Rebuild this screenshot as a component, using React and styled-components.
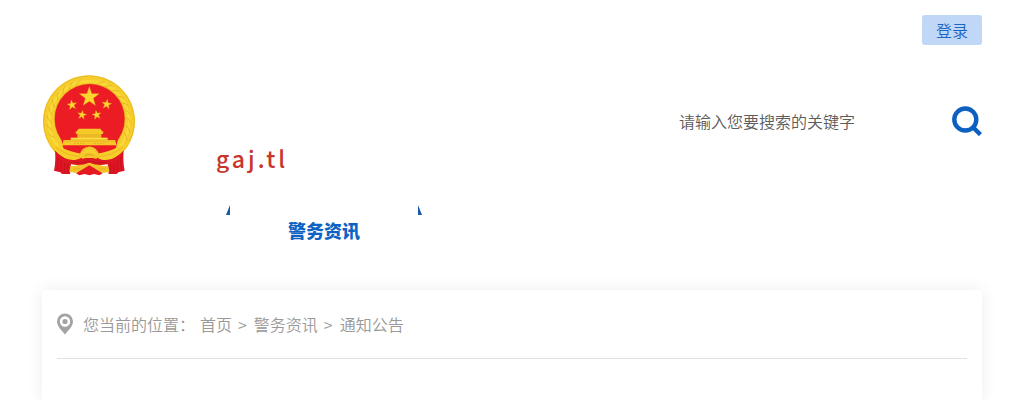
import React from 'react';
import styled, { createGlobalStyle } from 'styled-components';

const crumbs = [
  { label: '首页', href: '#home' },
  { label: '警务资讯', href: '#news' },
  { label: '通知公告', href: '#notice' },
];

// five pointed star centred on cx, cy
const star = (cx, cy, r, turn = 0) => {
  const points = [];
  for (let i = 0; i < 10; i += 1) {
    const radius = i % 2 ? r * 0.4 : r;
    const angle = ((i * 36 - 90 + turn) * Math.PI) / 180;
    points.push(`${(cx + radius * Math.cos(angle)).toFixed(1)},${(cy + radius * Math.sin(angle)).toFixed(1)}`);
  }
  return points.join(' ');
};

const gearTeeth = [-80, -60, -40, -20, 0, 20, 40, 60, 80];
const grains = [-112, -100, -88, -76, -64, -52, -40, -28, -16, 16, 28, 40, 52, 64, 76, 88, 100, 112];

const Emblem = () => (
  <EmblemSvg viewBox='27 21 276 303' role='img' aria-label='国徽'>
    <circle cx='165' cy='160' r='138' fill='#f5cd2c' />
    <circle cx='165' cy='160' r='136' fill='none' stroke='#eabb25' strokeWidth='3' />
    <circle cx='165' cy='160' r='120' fill='none' stroke='#fad936' strokeWidth='9' />
    {grains.map(angle => (
      <g key={angle} transform={`rotate(${angle} 165 160)`}>
        <path d='M157 48 Q166 36 177 33' fill='none' stroke='#dfab24' strokeWidth='2' />
      </g>
    ))}
    <circle cx='167' cy='153' r='107' fill='#e8b31e' />
    <circle cx='167' cy='153' r='105' fill='#ec1c24' />
    <path d='M80 205 H254 L246 240 Q205 284 166 282 Q110 282 88 240 Z' fill='#ec1c24' />

    <g fill='#fbd62d' stroke='#e9b426' strokeWidth='1'>
      <polygon points={star(166, 87, 31)} />
      <polygon points={star(114, 111, 15, -8)} />
      <polygon points={star(218, 109, 15, 8)} />
      <polygon points={star(144, 141, 14, 10)} />
      <polygon points={star(188, 141, 14, -10)} />
    </g>

    <g fill='#f5c928'>
      <path d='M134 182 H199 L207 193 H126 Z' />
      <path d='M130 196 H202 V210 H130 Z' fill='#ecb825' />
      <path d='M124 191 H209 L206 198 H127 Z' />
      <path d='M110 209 H221 V216 H243 L248 232 H84 L89 216 H110 Z' />
    </g>
    <path d='M111 211 H220' stroke='#fbdf55' strokeWidth='3' />
    <path d='M90 219 H242' stroke='#e0a925' strokeWidth='2' />
    <path d='M120 226 H150 M181 226 H211' stroke='#cf9a20' strokeWidth='2' strokeDasharray='4 5' />

    {/* red drapery on both sides */}
    <path d='M63 247 Q79 266 112 280 L108 318 L84 318 L79 313 L60 308 Q66 280 63 247 Z' fill='#df1523' />
    <path d='M269 247 Q252 266 220 280 L224 318 L248 318 L253 313 L272 308 Q266 280 269 247 Z' fill='#df1523' />
    <path
      d='M71 264 Q75 289 69 309 M80 273 Q85 292 80 311 M91 280 Q94 299 91 316 M102 287 V316 M261 264 Q257 289 263 309 M252 273 Q247 292 252 311 M241 280 Q238 299 241 316 M230 287 V316'
      fill='none'
      stroke='#b51322'
      strokeWidth='2'
    />

    {/* wheat stems that cross under the gate */}
    <path d='M45 222 Q66 232 92 243 Q126 256 153 258 Q142 276 113 277 Q71 268 45 222 Z' fill='#f7cd2a' />
    <path d='M287 222 Q266 232 240 243 Q206 256 179 258 Q190 276 219 277 Q261 268 287 222 Z' fill='#f7cd2a' />
    <path
      d='M66 238 Q94 262 139 266 M266 238 Q238 262 193 266'
      fill='none'
      stroke='#e0aa24'
      strokeWidth='2'
    />
    <path d='M139 263 A27 22 0 0 1 193 263 L188 271 H144 Z' fill='#f8cf2d' />
    {gearTeeth.map(angle => (
      <rect
        key={angle}
        x='162'
        y='236'
        width='9'
        height='8'
        fill='#f5c62b'
        transform={`rotate(${angle} 166 265)`}
      />
    ))}
    <path d='M142 268 A25 20 0 0 1 190 268 L184 276 H148 Z' fill='#f4c52b' />
    <path d='M153 263 A18 13 0 0 1 179 263' fill='none' stroke='#dba523' strokeWidth='3' />
    <path d='M66 258 Q88 274 116 276 Q139 277 155 270 H177 Q193 277 216 276 Q244 274 266 258 Q254 285 218 289 Q190 294 166 284 Q142 294 114 289 Q78 285 66 258 Z' fill='#de1823' />
    <path d='M118 283 Q145 288 166 279 Q187 288 214 283' fill='none' stroke='#b51120' strokeWidth='2' />
    <path d='M109 293 Q143 297 158 288 H174 Q189 297 223 293 L226 311 L207 315 L180 306 L166 297 L152 306 L125 315 L106 311 Z' fill='#f3c42a' />
    <path d='M126 316 L166 292 L206 316 L196 322 L180 318 L166 322 L152 318 L136 322 Z' fill='#e51a23' />
    <path d='M118 303 L139 302 M193 302 L214 303' stroke='#dba523' strokeWidth='2' />
  </EmblemSvg>
);

const SearchIcon = () => (
  <svg width='30' height='30' viewBox='0 0 30 30' aria-hidden='true'>
    <circle cx='13.3' cy='13.5' r='11' fill='none' stroke='#0d5fc0' strokeWidth='4.4' />
    <path d='M20.5 20.7 L28.4 28.6' stroke='#0d5fc0' strokeWidth='4.4' />
  </svg>
);

const PinIcon = () => (
  <svg width='16' height='22' viewBox='0 0 16 22' aria-hidden='true'>
    <path
      d='M8 0.5 A8 8 0 0 1 16 8.5 C16 13.5 11 17.5 8 21.5 C5 17.5 0 13.5 0 8.5 A8 8 0 0 1 8 0.5 Z M8 3.3 A5.2 5.2 0 1 0 8 13.7 A5.2 5.2 0 1 0 8 3.3 Z'
      fill='#a3a3a3'
      fillRule='evenodd'
    />
    <circle cx='8' cy='8.5' r='2.6' fill='#a3a3a3' />
  </svg>
);

const App = () => (
  <Page lang='zh-CN'>
    <GlobalStyle />
    <TopBar>
      <LoginButton type='button'>登录</LoginButton>
    </TopBar>
    <Header>
      <Brand href='#home'>
        <Emblem />
        <Domain>gaj.tl</Domain>
      </Brand>
      <SearchForm role='search' onSubmit={e => e.preventDefault()}>
        <SearchInput type='text' aria-label='搜索' placeholder='请输入您要搜索的关键字' />
        <SearchButton type='submit' aria-label='搜索'>
          <SearchIcon />
        </SearchButton>
      </SearchForm>
    </Header>
    <Nav>
      <Ear viewBox='0 0 4 10' aria-hidden='true'>
        <path d='M0 10 L4 0 V10 Z' />
      </Ear>
      <NavLink href='#news'>警务资讯</NavLink>
      <Ear viewBox='0 0 4 10' aria-hidden='true'>
        <path d='M4 10 L0 0 V10 Z' />
      </Ear>
    </Nav>
    <Card>
      <Breadcrumb aria-label='您当前的位置'>
        <PinIcon />
        <CrumbLabel>您当前的位置：</CrumbLabel>
        {crumbs.map((crumb, i) => (
          <React.Fragment key={crumb.href}>
            {i > 0 && <Separator>&gt;</Separator>}
            <Crumb href={crumb.href}>{crumb.label}</Crumb>
          </React.Fragment>
        ))}
      </Breadcrumb>
    </Card>
  </Page>
);

const GlobalStyle = createGlobalStyle`
  * {
    box-sizing: border-box;
  }
  body {
    margin: 0;
    background: #fff;
  }
  body, button, input {
    font-family: 'Noto Sans CJK SC', sans-serif;
    font-size: 16px;
    font-weight: 350;
  }
`;
const Page = styled.div`
  display: flex;
  flex-direction: column;
  max-width: 1284px;
  min-height: 100vh;
  margin: 0 auto;
  padding: 0 42px;
`;
const TopBar = styled.div`
  display: flex;
  justify-content: flex-end;
  padding: 15px 0;
`;
const LoginButton = styled.button`
  width: 60px;
  height: 30px;
  padding: 0;
  border: 0;
  border-radius: 3px;
  background: #c1d7f8;
  color: #1b66c4;
  line-height: 30px;
  cursor: pointer;
`;
const Header = styled.header`
  display: flex;
  justify-content: space-between;
  padding-top: 15px;
`;
const Brand = styled.a`
  display: flex;
  align-items: flex-end;
  gap: 80px;
  text-decoration: none;
`;
const EmblemSvg = styled.svg`
  width: 94px;
  height: 101px;
`;
const Domain = styled.span`
  color: #c8352b;
  font-size: 23px;
  font-weight: 500;
  line-height: 36px;
  letter-spacing: 3px;
`;
const SearchForm = styled.form`
  display: flex;
  align-items: center;
  align-self: flex-start;
  width: 304px;
  padding-top: 30px;
`;
const SearchInput = styled.input`
  flex: 1;
  min-width: 0;
  height: 32px;
  padding: 0 1px;
  border: 0;
  outline: 0;
  background: transparent;
  color: #5c5c5c;
  &::placeholder {
    color: #5c5c5c;
    opacity: 1;
  }
`;
const SearchButton = styled.button`
  display: flex;
  padding: 0;
  border: 0;
  background: transparent;
  cursor: pointer;
`;
const Nav = styled.nav`
  display: flex;
  padding: 29px 184px 35px;
`;
const Ear = styled.svg`
  width: 4px;
  height: 10px;
  fill: #1559a8;
`;
const NavLink = styled.a`
  width: 188px;
  height: 50px;
  color: #0d62c4;
  font-size: 18px;
  font-weight: 900;
  line-height: 50px;
  text-align: center;
  text-decoration: none;
`;
const Card = styled.main`
  flex: 1;
  padding: 0 15px;
  background: #fff;
  box-shadow: 0 0 15px rgba(0, 0, 0, 0.08);
`;
const Breadcrumb = styled.nav`
  display: flex;
  align-items: center;
  gap: 5px;
  height: 69px;
  border-bottom: 1px solid #e2e2e2;
  color: #999;
`;
const CrumbLabel = styled.span`
  padding-left: 5px;
`;
const Separator = styled.span`
  padding: 0 2px 0 1px;
`;
const Crumb = styled.a`
  color: #999;
  text-decoration: none;
  &:hover {
    color: #0d5fc0;
  }
`;

export default App;
